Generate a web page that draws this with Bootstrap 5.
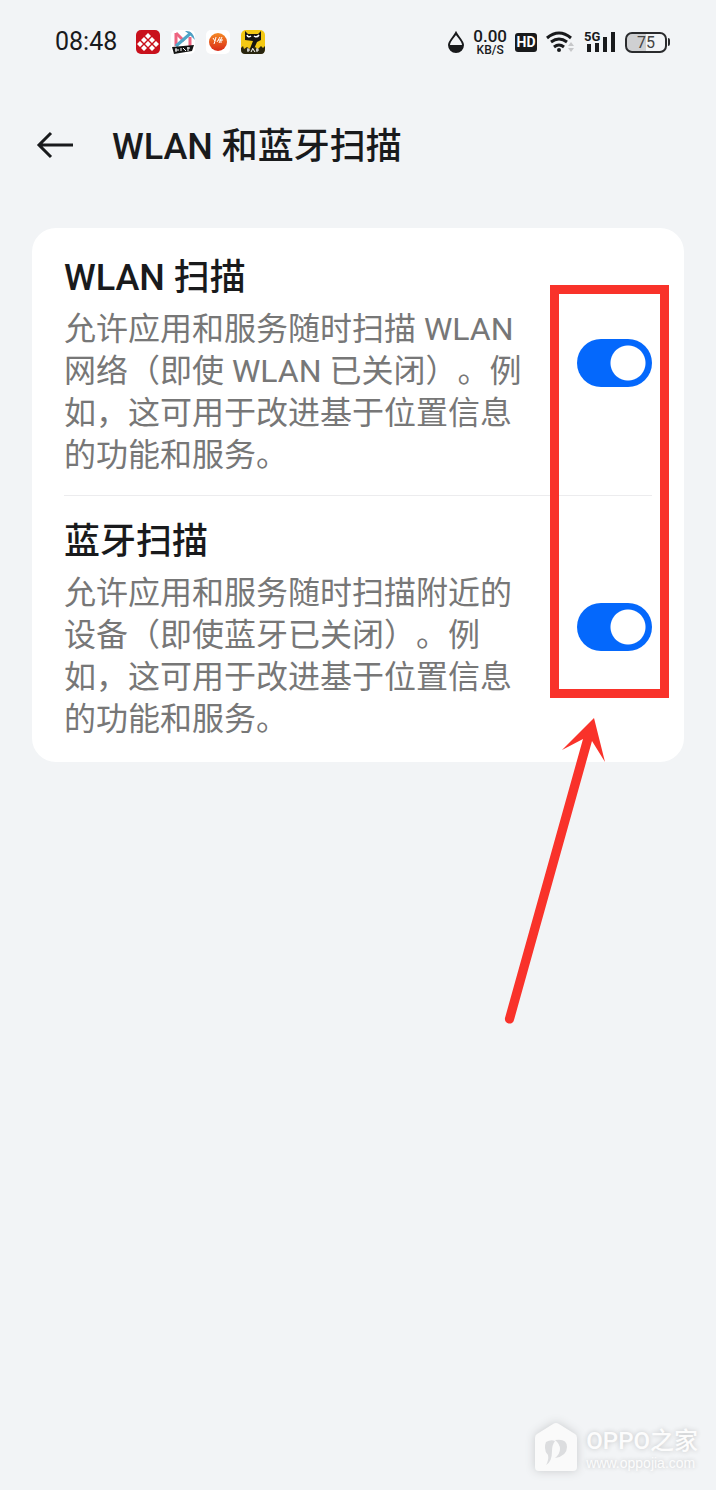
<!DOCTYPE html>
<html lang="zh-CN">
<head>
<meta charset="utf-8">
<meta name="viewport" content="width=device-width, initial-scale=1">
<title>WLAN 和蓝牙扫描</title>
<link href="https://cdn.jsdelivr.net/npm/bootstrap@5.3.0/dist/css/bootstrap.min.css" rel="stylesheet">
<style>
  body { background: #f2f4f6; color: #191a1c; font-family: Roboto, "Noto Sans CJK SC", sans-serif; text-spacing-trim: space-all; font-feature-settings: "chws" 0; }
  .statusbar { height: 84px; padding: 0 46px 0 55px; }
  .clock { font-size: 25px; line-height: 28px; margin-right: 19px; }
  .apps { gap: 11px; }
  .signals { gap: 8px; }
  .speed { font-family: Roboto, sans-serif; font-size: 17px; line-height: 16px; font-weight: 500; }
  .speed-unit { font-size: 12px; line-height: 12px; }
  .hd-tag { width: 22px; height: 19px; border-radius: 3px; background: #191a1c; color: #fff; font-size: 14px; line-height: 19px; }
  .battery { width: 42px; height: 21px; border: 2px solid #2a2b2d; border-radius: 7px; background: linear-gradient(90deg, #cfd0d2 50%, transparent 50%); font-size: 16px; line-height: 18px; color: #444; }
  .battery-nub { width: 2px; height: 8px; margin-left: 1px; background: #2a2b2d; border-radius: 0 2px 2px 0; }
  .titlebar { height: 124px; padding: 0 36px; gap: 37px; margin-bottom: 20px; }
  .titlebar h1, .scan-title { font-size: 36px; line-height: 42px; font-weight: 500; }
  .titlebar h1 { padding-top: 2px; }
  .scan-card { margin: 0 32px; padding: 4px 32px 2px; border-radius: 24px; }
  .scan-item { padding: 25px 0 19px; gap: 46px; }
  .scan-item + .scan-item { box-shadow: 0 -1px #ececee; }
  .scan-title { margin-bottom: 9px; }
  .scan-text { font-size: 32px; line-height: 42px; color: #777; padding-bottom: 1px; }
  .scan-switch.form-check-input { width: 75px; height: 48px; margin: 0 0 8px; border: 0; border-radius: 24px; background: #c9ccd1 radial-gradient(circle at 24px 24px, #fff 17px, transparent 18px); }
  .scan-switch.form-check-input:checked { background: #0468fc radial-gradient(circle at 51px 24px, #fff 17px, transparent 18px); }
  .mark-box { top: 57px; right: 15px; bottom: 64px; width: 119px; border: 9px solid #f9322a; pointer-events: none; }
  .mark-arrow { top: 488px; right: 76px; pointer-events: none; }
  .watermark { padding: 0 18px 18px; gap: 9px; color: #fcfcfc; }
  .watermark svg { filter: drop-shadow(0 0 5px #c8cacc); }
  .wm-name { font-size: 24px; line-height: 28px; font-weight: 500; padding-top: 4px; text-shadow: 0 0 5px #c0c2c4; }
  .wm-site { font: 14px/16px "Liberation Sans", sans-serif; text-shadow: 0 0 4px #c0c2c4; }
</style>
</head>
<body class="min-vh-100 d-flex flex-column">

<div class="statusbar d-flex align-items-center justify-content-between">
  <div class="d-flex align-items-center">
    <span class="clock">08:48</span>
    <div class="apps d-flex">
      <svg width="24" height="24" viewBox="0 0 24 24" aria-hidden="true">
        <rect width="24" height="24" rx="5" fill="#c9101c"/>
        <path fill="#fff" d="M12 3l3 3-3 3-3-3zM8 7l3 3-3 3-3-3zM16 7l3 3-3 3-3-3zM12 11l3 3-3 3-3-3zM4 11l3 3-3 3-3-3zM20 11l3 3-3 3-3-3zM8 15l3 3-3 3-3-3zM16 15l3 3-3 3-3-3z"/>
      </svg>
      <svg width="24" height="24" viewBox="0 0 24 24" aria-hidden="true">
        <rect width="24" height="24" rx="5" fill="#fff"/>
        <path d="M5 3v13M19 7v9" stroke="#ee6480" stroke-width="3"/>
        <path d="M5 3l8 8" stroke="#ee6480" stroke-width="3"/>
        <path d="M20 3L5 16" stroke="#4fa6c8" stroke-width="3"/>
        <path d="M14 1q8-1 10 9l-5-5z" fill="#4e9fc4"/>
        <path d="M1 17l22-2-2 6-18 3z" fill="#151515"/>
        <path d="M5 18v4M4 20h4M10 18v3M12 18l3 3M17 17v4M16 18h3" stroke="#fff" stroke-width="1"/>
      </svg>
      <svg width="24" height="24" viewBox="0 0 24 24" aria-hidden="true">
        <defs><linearGradient id="sun" x2="0" y2="1"><stop stop-color="#f58a25"/><stop offset="1" stop-color="#d92a18"/></linearGradient></defs>
        <rect width="24" height="24" rx="5" fill="#fff"/>
        <circle cx="12" cy="12" r="9" fill="url(#sun)"/>
        <path d="M7 8l2 3 1-4M9 11l-1 3M11 12l3-5M13 13l3-6M12 10l5 0M15 10v3" stroke="#fff" stroke-width="1" fill="none"/>
      </svg>
      <svg width="24" height="24" viewBox="0 0 24 24" aria-hidden="true">
        <rect width="24" height="24" rx="5" fill="#f3c814"/>
        <path d="M4 10V1l3 3h10l3-3v9l-4 2-4 9H8l4-10z" fill="#171511"/>
        <path d="M6 5q1 3 4 1M13 6q3 2 5-1" stroke="#fff" stroke-width="1.500" fill="none"/>
        <path d="M0 18l2-2 1 3 3-2 3 2 5-2 3 2 3-3 2 2 2-2v3q0 5-4 5H4q-4 0-4-4z" fill="#29250f"/>
        <path d="M7 18v4M6 20h3M12 18l-2 4M12 19l2 3M16 18v4M15 20h3" stroke="#fff" stroke-width="1"/>
      </svg>
    </div>
  </div>
  <div class="signals d-flex align-items-center">
    <svg width="18" height="23" viewBox="0 0 18 23" aria-hidden="true">
      <path d="M9 2C7 6 2 10 2 14a7 7 0 0 0 14 0C16 10 11 6 9 2z" fill="none" stroke="#191a1c" stroke-width="2"/>
      <path d="M2 14h14a7 7 0 0 1-14 0z" fill="#191a1c"/>
    </svg>
    <div class="speed text-center"><div>0.00</div><div class="speed-unit">KB/S</div></div>
    <span class="hd-tag text-center fw-bold">HD</span>
    <svg width="31" height="24" viewBox="0 0 31 24" aria-hidden="true">
      <g fill="none" stroke="#191a1c" stroke-width="3">
        <path d="M2 8q12-10 24 0"/><path d="M6 12q8-6 16 0"/><path d="M9 17q5-4 10 0"/>
      </g>
      <circle cx="14" cy="20" r="2" fill="#191a1c"/>
      <path d="M23 16l3-4 3 4zM23 18h6l-3 4z" fill="#c6c7c9"/>
    </svg>
    <svg width="33" height="24" viewBox="0 0 33 24" aria-label="5G">
      <path d="M3 14h4v8H3zM11 13h4v9h-4zM19 7h4v15h-4zM27 2h4v20h-4z" fill="#191a1c"/>
      <text x="0" y="11" font-size="13" font-weight="700" fill="#191a1c">5G</text>
    </svg>
    <div class="d-flex align-items-center"><span class="battery text-center">75</span><span class="battery-nub"></span></div>
  </div>
</div>

<header class="titlebar d-flex align-items-center">
  <button type="button" class="btn p-0 border-0 d-flex" aria-label="返回">
    <svg width="39" height="30" viewBox="0 0 39 30" fill="none" stroke="#191a1c" stroke-width="3">
      <path d="M37 14H3M15 2L3 14l12 12"/>
    </svg>
  </button>
  <h1 class="mb-0">WLAN 和蓝牙扫描</h1>
</header>

<main class="scan-card position-relative bg-white">
  <div class="scan-item d-flex align-items-center">
    <div class="flex-fill">
      <label class="scan-title d-block" for="wlan-scan">WLAN 扫描</label>
      <p class="scan-text mb-0" id="wlan-text">允许应用和服务随时扫描 WLAN 网络（即使 WLAN 已关闭）。例如，这可用于改进基于位置信息的功能和服务。</p>
    </div>
    <input class="scan-switch form-check-input flex-shrink-0" type="checkbox" role="switch" id="wlan-scan" aria-describedby="wlan-text" checked>
  </div>
  <div class="scan-item d-flex align-items-center">
    <div class="flex-fill">
      <label class="scan-title d-block" for="bt-scan">蓝牙扫描</label>
      <p class="scan-text mb-0" id="bt-text">允许应用和服务随时扫描附近的设备（即使蓝牙已关闭）。例如，这可用于改进基于位置信息的功能和服务。</p>
    </div>
    <input class="scan-switch form-check-input flex-shrink-0" type="checkbox" role="switch" id="bt-scan" aria-describedby="bt-text" checked>
  </div>
  <div class="mark-box position-absolute"></div>
  <svg class="mark-arrow position-absolute" width="104" height="310" viewBox="0 0 104 310" aria-hidden="true">
    <path d="M90 2L101 46 88 25 10 304a4 4 0 0 1-9-2L79 23 58 34z" fill="#f9322a"/>
  </svg>
</main>

<footer class="watermark mt-auto d-flex align-items-center justify-content-end">
  <svg width="42" height="50" viewBox="0 0 42 50" aria-hidden="true">
    <path d="M18 2q3-2 6 0l16 10q2 1 2 4v29q0 4-4 4H4q-4 0-4-4V16q0-3 2-4z" fill="#fafafa"/>
    <path d="M11 20q5-3 9-1-3 4-3 10 0 11-6 14 3-5 2-10-3-3-3-7 0-4 1-6z" fill="#dcdddf"/>
    <path d="M20 18q12-2 12 7 0 9-12 11 5-4 5-9 0-5-5-9z" fill="#dcdddf"/>
  </svg>
  <div>
    <div class="wm-name">OPPO之家</div>
    <div class="wm-site">www.oppojia.com</div>
  </div>
</footer>

<script src="https://cdn.jsdelivr.net/npm/bootstrap@5.3.0/dist/js/bootstrap.bundle.min.js"></script>
</body>
</html>
